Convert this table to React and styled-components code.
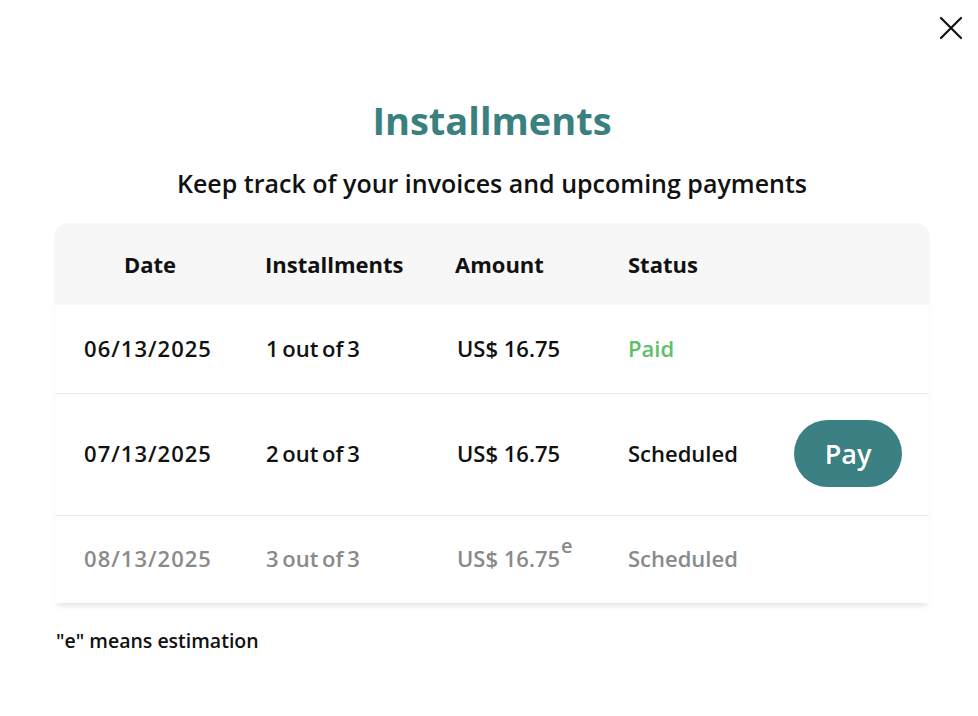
import React from 'react';
import styled, { createGlobalStyle } from 'styled-components';

const GlobalStyle = createGlobalStyle`
  html, body {
    margin: 0;
    padding: 0;
    background: #ffffff;
  }
  body {
    font-family: 'Open Sans', 'Noto Sans', sans-serif;
    color: #111111;
  }
`;

const Page = styled.div`
  width: 978px;
  height: 716px;
  box-sizing: border-box;
  position: relative;
  padding: 95px 49px 0 55px;
`;

const CloseButton = styled.button`
  position: absolute;
  top: 14px;
  right: 13px;
  width: 28px;
  height: 28px;
  padding: 0;
  border: 0;
  background: transparent;
  cursor: pointer;
  display: flex;
  align-items: center;
  justify-content: center;
`;

const Title = styled.h1`
  margin: 0;
  text-align: center;
  color: #3a8080;
  font-size: 38px;
  font-weight: 700;
  line-height: 50px;
`;

const Subtitle = styled.p`
  margin: 22px 0 24px;
  text-align: center;
  font-size: 25px;
  font-weight: 600;
  line-height: 32px;
  color: #111111;
`;

const Card = styled.div`
  border-radius: 12px 12px 0 0;
  background: #ffffff;
  box-shadow: 0 5px 6px -3px rgba(0, 0, 0, 0.14);
`;

const Row = styled.div`
  display: grid;
  grid-template-columns: 210px 190px 173px 160px 1fr;
  align-items: center;
  box-sizing: border-box;
  height: ${(p) => p.$height}px;
  padding-bottom: ${(p) => (p.$body ? 3 : 0)}px;
  border-top: 1px solid ${(p) => (p.$divider ? '#ececec' : 'transparent')};
  color: ${(p) => (p.$muted ? '#8a8a8a' : '#111111')};
`;

const HeadRow = styled(Row)`
  background: #f7f7f7;
  border-top: 0;
  border-radius: 12px 12px 0 0;
`;

const Cell = styled.div`
  font-size: 22px;
  font-weight: 600;
  white-space: nowrap;
  color: ${(p) => p.$color || 'inherit'};
`;

const DateCell = styled(Cell)`
  text-align: center;
  padding-right: ${(p) => (p.$head ? 20 : 24)}px;
  letter-spacing: ${(p) => (p.$head ? 0 : 1)}px;
  font-weight: ${(p) => (p.$head ? 700 : 600)};
`;

const InstCell = styled(Cell)`
  word-spacing: -2px;
  padding-left: 1px;
`;

const AmountCell = styled(Cell)`
  padding-left: 2px;
`;

const HeadCell = styled(Cell)`
  font-weight: 700;
`;

const Sup = styled.sup`
  font-size: 20px;
  line-height: 0;
  vertical-align: 14px;
  margin-left: 1px;
`;

const PayButton = styled.button`
  margin: 1px 0 0 6px;
  width: 108px;
  height: 67px;
  border: 0;
  border-radius: 34px;
  background: #3b8082;
  color: #ffffff;
  font-family: inherit;
  font-size: 27px;
  font-weight: 600;
  cursor: pointer;
`;

const Note = styled.p`
  margin: 24px 0 0 1px;
  font-size: 19.5px;
  font-weight: 600;
  color: #111111;
`;

const rows = [
  { date: '06/13/2025', inst: '1 out of 3', amount: 'US$ 16.75', status: 'Paid', statusColor: '#5dbf6b', height: 88 },
  { date: '07/13/2025', inst: '2 out of 3', amount: 'US$ 16.75', status: 'Scheduled', pay: true, height: 122 },
  { date: '08/13/2025', inst: '3 out of 3', amount: 'US$ 16.75', status: 'Scheduled', estimated: true, muted: true, height: 88 },
];

export default function App() {
  return (
    <>
      <GlobalStyle />
      <Page>
        <CloseButton aria-label="Close">
          <svg width="24" height="24" viewBox="0 0 24 24" fill="none" stroke="#111" strokeWidth="2.2" strokeLinecap="round">
            <path d="M2 2L22 22M22 2L2 22" />
          </svg>
        </CloseButton>
        <Title>Installments</Title>
        <Subtitle>Keep track of your invoices and upcoming payments</Subtitle>
        <Card>
          <HeadRow $height={82}>
            <DateCell $head>Date</DateCell>
            <HeadCell>Installments</HeadCell>
            <HeadCell>Amount</HeadCell>
            <HeadCell>Status</HeadCell>
            <div />
          </HeadRow>
          {rows.map((r, i) => (
            <Row key={r.date} $height={r.height} $body $divider={i > 0} $muted={r.muted}>
              <DateCell>{r.date}</DateCell>
              <InstCell>{r.inst}</InstCell>
              <AmountCell>
                {r.amount}
                {r.estimated && <Sup>e</Sup>}
              </AmountCell>
              <Cell $color={r.statusColor}>{r.status}</Cell>
              <div>{r.pay && <PayButton>Pay</PayButton>}</div>
            </Row>
          ))}
        </Card>
        <Note>"e" means estimation</Note>
      </Page>
    </>
  );
}
